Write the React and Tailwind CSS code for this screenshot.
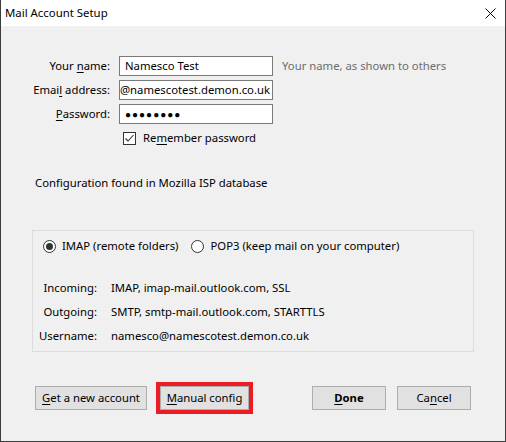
const font = { fontFamily: '"Noto Sans", "Segoe UI", sans-serif' };

const U = ({ children }) => <span className="underline underline-offset-2">{children}</span>;

const Btn = ({ children, className = "", w }) => (
  <button
    className={`h-[24px] border border-[#adadad] bg-[#e1e1e1] text-[11.3px] text-black leading-none ${w} ${className}`}
  >
    {children}
  </button>
);

const Radio = ({ checked }) => (
  <span className="w-[13px] h-[13px] rounded-full border border-[#333] bg-white flex items-center justify-center">
    {checked && <span className="w-[7px] h-[7px] rounded-full bg-[#333]" />}
  </span>
);

const Field = ({ children }) => (
  <div className="w-[154px] h-[20px] border border-[#7a7a7a] bg-white overflow-hidden flex items-center px-[5px] whitespace-nowrap">
    {children}
  </div>
);

export default function App() {
  return (
    <div style={font} className="w-[506px] h-[442px] border-x border-b border-[#3c3c3c] bg-[#f0f0f0] flex flex-col text-[11.3px] text-black">
      <div className="h-[26px] bg-white flex items-center justify-between pl-[4px] pr-[9px]">
        <span className="text-[11.4px]">Mail Account Setup</span>
        <svg width="11" height="11" viewBox="0 0 11 11">
          <path d="M0.5 0.5L10.5 10.5M10.5 0.5L0.5 10.5" stroke="#000" strokeWidth="1" />
        </svg>
      </div>

      <div className="grid grid-cols-[109px_154px_auto] gap-x-[9px] gap-y-[4px] mt-[30px] items-center">
        <span className="text-right">Your <U>n</U>ame:</span>
        <Field>Namesco Test</Field>
        <span className="text-[#6d6d6d]">Your name, as shown to others</span>

        <span className="text-right">Emai<U>l</U> address:</span>
        <div className="w-[154px] h-[20px] border border-[#7a7a7a] bg-white overflow-hidden flex items-center justify-end pr-[2px] whitespace-nowrap">
          <span>namesco@namescotest.demon.co.uk</span>
        </div>
        <span />

        <span className="text-right"><U>P</U>assword:</span>
        <Field>
          <span className="text-[10px] tracking-[1px]">●●●●●●●●</span>
        </Field>
        <span />
      </div>

      <div className="flex items-center ml-[122px] mt-[7px] gap-[7px] h-[14px]">
        <span className="w-[13px] h-[13px] border border-[#333] bg-white flex items-center justify-center">
          <svg width="11" height="11" viewBox="0 0 11 11">
            <path d="M1.5 5.5L4 8L9.5 2" stroke="#333" strokeWidth="1.1" fill="none" />
          </svg>
        </span>
        <span>Re<U>m</U>ember password</span>
      </div>

      <div className="ml-[34px] mt-[30px] h-[16px] leading-[16px]">Configuration found in Mozilla ISP database</div>

      <div className="ml-[31px] mt-[39px] w-[442px] h-[122px] border border-[#dcdcdc] flex flex-col">
        <div className="flex items-center mt-[8px] ml-[10px] h-[14px]">
          <Radio checked />
          <span className="ml-[6px]">IMAP (remote folders)</span>
          <span className="ml-[13px]"><Radio /></span>
          <span className="ml-[6px]">POP3 (keep mail on your computer)</span>
        </div>
        <div className="grid grid-cols-[64px_auto] gap-x-[14px] gap-y-[8px] mt-[27px] leading-[16px]">
          <span className="text-right">Incoming:</span>
          <span>IMAP, imap-mail.outlook.com, SSL</span>
          <span className="text-right">Outgoing:</span>
          <span>SMTP, smtp-mail.outlook.com, STARTTLS</span>
          <span className="text-right">Username:</span>
          <span>namesco@namescotest.demon.co.uk</span>
        </div>
      </div>

      <div className="flex items-center mt-[34px] ml-[34px]">
        <Btn w="w-[112px]"><U>G</U>et a new account</Btn>
        <Btn w="w-[89px]" className="ml-[13px] outline-4 outline-[#ed1c24]"><U>M</U>anual config</Btn>
        <Btn w="w-[74px]" className="ml-[63px] font-bold"><U>D</U>one</Btn>
        <Btn w="w-[74px]" className="ml-[11px]">Ca<U>n</U>cel</Btn>
      </div>
    </div>
  );
}
